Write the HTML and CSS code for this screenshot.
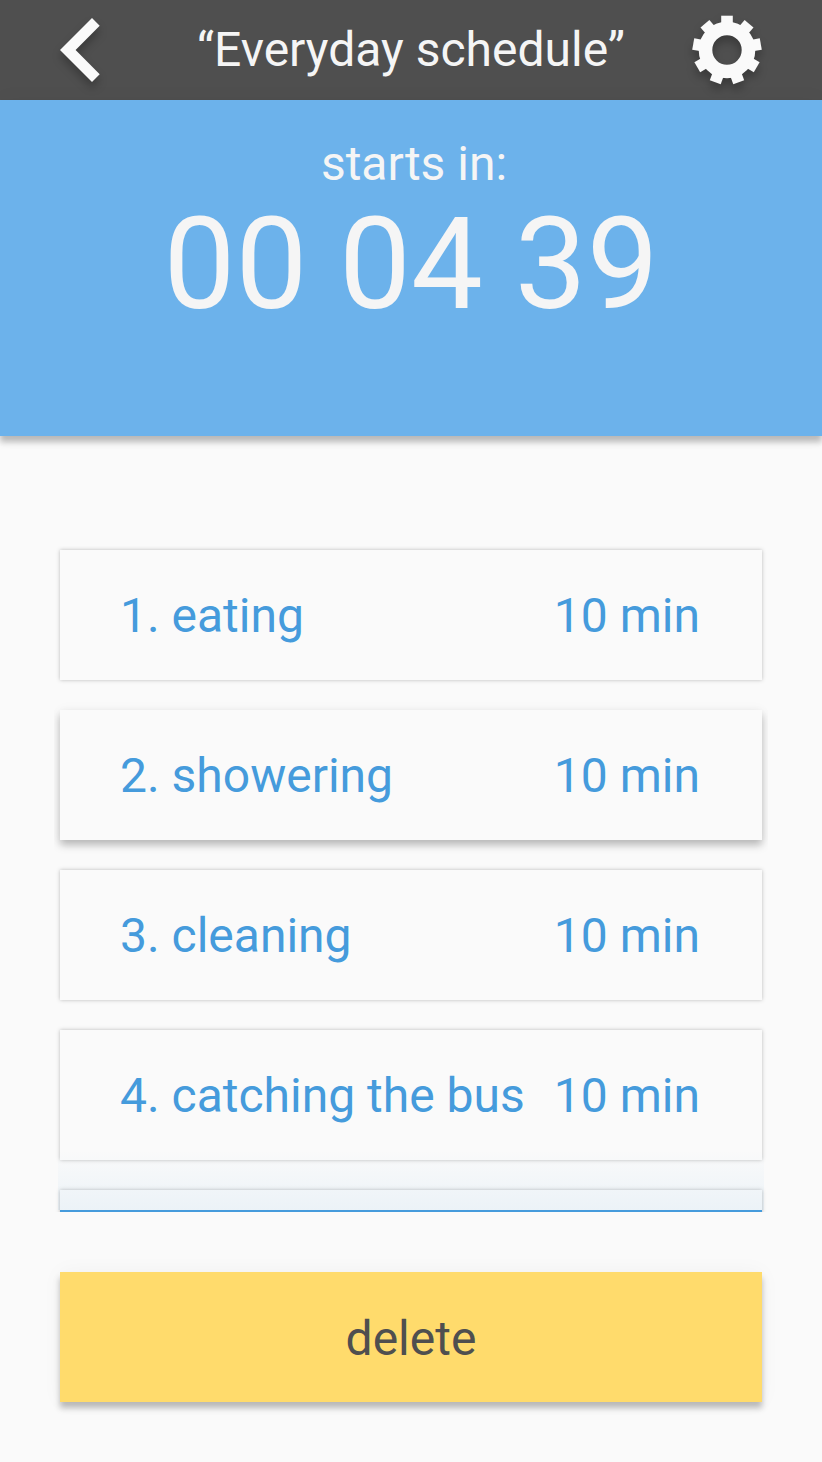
FILE: index.html
```html
<!DOCTYPE html>
<html lang="en">
<head>
<meta charset="utf-8">
<title>Everyday schedule</title>
<link rel="stylesheet" href="styles.css">
</head>
<body>
<header class="bar">
  <svg class="back" viewBox="0 0 42 64"><path d="M32 0 39.7 7.7 15.6 32 39.7 56.3 32 64 0 32Z" fill="#fafafa"/></svg>
  <h1 class="title">“Everyday schedule”</h1>
  <svg class="gear" viewBox="-36 -36 72 72"><circle r="21.5" fill="none" stroke="#fafafa" stroke-width="13.6"/><g fill="#fafafa"><path id="t" d="M-5.8-25V-34.3H5.8V-25Z"/><use href="#t" transform="rotate(40)"/><use href="#t" transform="rotate(80)"/><use href="#t" transform="rotate(120)"/><use href="#t" transform="rotate(160)"/><use href="#t" transform="rotate(200)"/><use href="#t" transform="rotate(240)"/><use href="#t" transform="rotate(280)"/><use href="#t" transform="rotate(320)"/></g></svg>
</header>
<section class="timer">
  <p class="label">starts in:</p>
  <p class="count">00 04 39</p>
</section>
<main class="content">
  <ol class="list">
    <li class="card"><span>1. eating</span><span>10 min</span></li>
    <li class="card raised"><span>2. showering</span><span>10 min</span></li>
    <li class="card"><span>3. cleaning</span><span>10 min</span></li>
    <li class="card"><span>4. catching the bus</span><span>10 min</span></li>
    <li class="card"></li>
  </ol>
  <button class="delete">delete</button>
</main>
</body>
</html>
```
FILE: styles.css
```css
* { box-sizing: border-box; margin: 0; padding: 0; }
body { width: 822px; height: 1462px; background: #fafafa; font-family: Roboto, sans-serif; font-size: 48px; overflow: hidden; }
.bar { height: 100px; padding: 0 60px; background: #4f4f4f; display: flex; align-items: center; justify-content: space-between; }
.back { width: 42px; height: 64px; overflow: visible; filter: drop-shadow(0 6px 4px rgba(0,0,0,.26)); }
.gear { width: 72px; height: 72px; margin-right: -1px; overflow: visible; filter: drop-shadow(0 6px 4px rgba(0,0,0,.26)); }
.title { font-size: 48px; font-weight: 400; line-height: 56px; color: #f5f5f5; margin-left: 29px; }
.timer { height: 336px; padding-top: 36px; background: #6cb2eb; color: #f5f5f5; text-align: center; box-shadow: 0 6px 6px rgba(0,0,0,.25), 0 0 20px rgba(0,0,0,.04); }
.label { line-height: 56px; padding-left: 6px; }
.count { font-size: 128px; line-height: 150px; margin-top: -3px; }
.content { padding: 110px 54px 0; }
.list { position: relative; height: 666px; padding: 4px 6px 0; overflow: hidden; list-style: none; }
.card { display: flex; align-items: center; justify-content: space-between; height: 130px; margin-bottom: 30px; padding: 0 62px 0 60px; color: #459bdc; background: #fafafa; box-shadow: 0 0 4px rgba(0,0,0,.26); }
.raised { box-shadow: 0 5px 8px rgba(0,0,0,.26), 0 0 12px rgba(0,0,0,.04); }
.list::after { content: ""; position: absolute; left: 4px; right: 4px; bottom: 2px; height: 60px; background: linear-gradient(rgba(69,155,220,0), rgba(69,155,220,.08)); }
.list::before { content: ""; position: absolute; left: 6px; right: 6px; bottom: 0; height: 2px; background: #459bdc; }
.delete { display: block; width: 702px; height: 130px; margin: 60px 6px 0; padding-top: 2px; border: 0; border-radius: 0; background: #ffdb6c; color: #4f4f4f; font: 48px Roboto, sans-serif; box-shadow: 0 6px 6px rgba(0,0,0,.25), 0 0 20px rgba(0,0,0,.04); }
```
